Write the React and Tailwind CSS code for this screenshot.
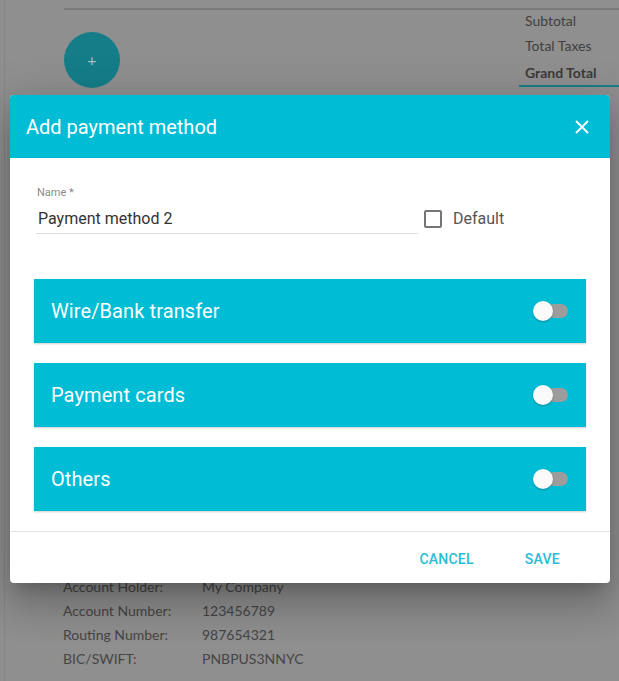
import React from "react";

function Toggle() {
  return (
    <div className="relative w-[36px] h-[20px] flex items-center">
      <div className="absolute left-[14px] w-[21px] h-[14px] rounded-full bg-[#9c9c9c]" />
      <div className="absolute left-0 w-[20px] h-[20px] rounded-full bg-[#fafafa] shadow-[0_1px_2px_rgba(0,0,0,0.25)]" />
    </div>
  );
}

function MethodCard({ label }) {
  return (
    <div className="h-[64px] bg-[#00bcd4] flex items-center justify-between pl-[17px] pr-[17px] shadow-[0_1px_2px_rgba(0,0,0,0.2)]">
      <span className="text-white text-[20px] tracking-[0.1px]">{label}</span>
      <Toggle />
    </div>
  );
}

export default function App() {
  const rows = [
    ["Account Holder:", "My Company"],
    ["Account Number:", "123456789"],
    ["Routing Number:", "987654321"],
    ["BIC/SWIFT:", "PNBPUS3NNYC"],
  ];
  return (
    <div
      className="relative w-[619px] h-[681px] overflow-hidden bg-[#8f8f8f]"
      style={{ fontFamily: "Lato, 'Liberation Sans', sans-serif" }}
    >
      {/* background page (dimmed) */}
      <div className="h-full border-l border-[#868686] ml-[4px] flex flex-col">
        <div className="ml-[59px] mt-[8px] h-[2px] bg-[#7b7b7b]" />
        <div className="flex justify-between">
          <div className="ml-[59px] mt-[22px] w-[56px] h-[56px] rounded-full bg-[#157d88] flex items-center justify-center text-[#9fc6ca] text-[16px] leading-none">
            +
          </div>
          <div className="flex flex-col mt-[-2px]">
            <div className="pl-[6px] text-[14px] leading-[25px] text-[#3f3f3f]">Subtotal</div>
            <div className="pl-[6px] text-[14px] leading-[25px] text-[#3f3f3f]">Total Taxes</div>
            <div className="mt-[3px] pl-[6px] text-[14px] leading-[24px] font-bold text-[#3a3a3a] w-[100px] border-b-2 border-[#177f8a]">
              Grand Total
            </div>
          </div>
        </div>
        <div className="mt-[486px] ml-[58px] flex flex-col">
          {rows.map(([k, v]) => (
            <div key={k} className="flex h-[24px] items-center text-[14px] text-[#454545]">
              <span className="w-[139px]">{k}</span>
              <span>{v}</span>
            </div>
          ))}
        </div>
      </div>

      {/* modal dialog */}
      <div
        className="absolute left-[10px] top-[95px] w-[600px] h-[488px] bg-white rounded-[4px] overflow-hidden shadow-[0_11px_15px_-7px_rgba(0,0,0,0.2),0_24px_38px_3px_rgba(0,0,0,0.14),0_9px_46px_8px_rgba(0,0,0,0.12)] flex flex-col"
        style={{ fontFamily: "Roboto, 'Liberation Sans', sans-serif" }}
      >
        <div className="h-[63px] bg-[#00bcd4] flex items-center justify-between pl-[16px] pr-[21px]">
          <span className="text-white text-[20px]">Add payment method</span>
          <svg width="14" height="14" viewBox="0 0 14 14" className="text-white">
            <path d="M1.5 1.5 L12.5 12.5 M12.5 1.5 L1.5 12.5" stroke="currentColor" strokeWidth="1.8" strokeLinecap="round" />
          </svg>
        </div>

        <div className="flex flex-col px-[24px] pt-[28px]">
          <div className="flex items-start">
            <div className="ml-[2px] w-[382px] flex flex-col">
              <span className="text-[11px] leading-[14px] text-[#8a8a8a] pl-[1px]">Name *</span>
              <div className="mt-[5px] h-[29px] flex items-center border-b border-[#dedede] text-[16px] text-[#333] pl-[2px]">
                Payment method 2
              </div>
            </div>
            <div className="ml-[6px] mt-[21px] flex items-center">
              <div className="w-[18px] h-[18px] border-2 border-[#757575] rounded-[2px]" />
              <span className="ml-[11px] text-[16px] text-[#555]">Default</span>
            </div>
          </div>

          <div className="mt-[45px] flex flex-col gap-[20px]">
            <MethodCard label="Wire/Bank transfer" />
            <MethodCard label="Payment cards" />
            <MethodCard label="Others" />
          </div>
        </div>

        <div className="mt-[20px] pt-[3px] border-t border-[#e6e6e6] flex-1 flex items-center justify-end gap-[51px] pr-[50px]">
          <span className="text-[14px] font-medium tracking-[0.2px] text-[#27bdd5]">CANCEL</span>
          <span className="text-[14px] font-medium tracking-[0.3px] text-[#27bdd5]">SAVE</span>
        </div>
      </div>
    </div>
  );
}
